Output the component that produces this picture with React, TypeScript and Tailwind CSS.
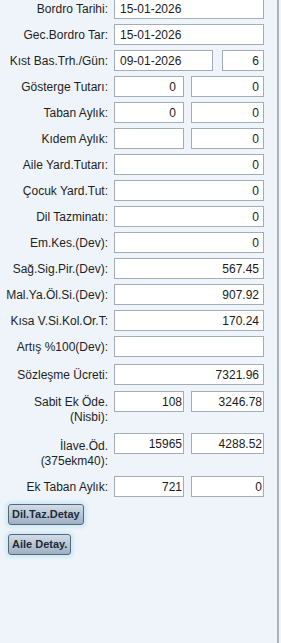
import React from "react";

type Field = { value: string; w: string; left?: boolean; pr?: string };
type Row = { label: string[]; fields: Field[]; mt: string; twoLine?: boolean; lpt?: string };

const full = "w-[150px]";

const rows: Row[] = [
  { label: ["Bordro Tarihi:"], fields: [{ value: "15-01-2026", w: full, left: true }], mt: "mt-[-2px]" },
  { label: ["Gec.Bordro Tar:"], fields: [{ value: "15-01-2026", w: full, left: true }], mt: "mt-[5px]" },
  {
    label: ["Kıst Bas.Trh./Gün:"],
    fields: [
      { value: "09-01-2026", w: "w-[99px]", left: true },
      { value: "6", w: "w-[42px]" },
    ],
    mt: "mt-[5px]",
  },
  {
    label: ["Gösterge Tutarı:"],
    fields: [
      { value: "0", w: "w-[70px]", pr: "pr-[7px]" },
      { value: "0", w: "w-[73px]" },
    ],
    mt: "mt-[5px]",
  },
  {
    label: ["Taban Aylık:"],
    fields: [
      { value: "0", w: "w-[70px]", pr: "pr-[7px]" },
      { value: "0", w: "w-[73px]" },
    ],
    mt: "mt-[5px]",
  },
  {
    label: ["Kıdem Aylık:"],
    fields: [
      { value: "", w: "w-[70px]" },
      { value: "0", w: "w-[73px]" },
    ],
    mt: "mt-[5px]",
  },
  { label: ["Aile Yard.Tutarı:"], fields: [{ value: "0", w: full }], mt: "mt-[5px]" },
  { label: ["Çocuk Yard.Tut:"], fields: [{ value: "0", w: full }], mt: "mt-[5px]" },
  { label: ["Dil Tazminatı:"], fields: [{ value: "0", w: full }], mt: "mt-[5px]" },
  { label: ["Em.Kes.(Dev):"], fields: [{ value: "0", w: full }], mt: "mt-[5px]" },
  { label: ["Sağ.Sig.Pir.(Dev):"], fields: [{ value: "567.45", w: full }], mt: "mt-[5px]" },
  { label: ["Mal.Ya.Öl.Si.(Dev):"], fields: [{ value: "907.92", w: full }], mt: "mt-[5px]" },
  { label: ["Kısa V.Si.Kol.Or.T:"], fields: [{ value: "170.24", w: full }], mt: "mt-[5px]" },
  { label: ["Artış %100(Dev):"], fields: [{ value: "", w: full }], mt: "mt-[5px]" },
  { label: ["Sözleşme Ücreti:"], fields: [{ value: "7321.96", w: full }], mt: "mt-[7px]" },
  {
    label: ["Sabit Ek Öde.", "(Nisbi):"],
    fields: [
      { value: "108", w: "w-[70px]", pr: "pr-px" },
      { value: "3246.78", w: "w-[73px]", pr: "pr-px" },
    ],
    mt: "mt-[6px]",
    twoLine: true,
    lpt: "pt-[4px]",
  },
  {
    label: ["İlave.Öd.", "(375ekm40):"],
    fields: [
      { value: "15965", w: "w-[70px]", pr: "pr-px" },
      { value: "4288.52", w: "w-[73px]", pr: "pr-px" },
    ],
    mt: "mt-[8px]",
    twoLine: true,
    lpt: "pt-[6px]",
  },
  {
    label: ["Ek Taban Aylık:"],
    fields: [
      { value: "721", w: "w-[70px]", pr: "pr-px" },
      { value: "0", w: "w-[73px]", pr: "pr-px" },
    ],
    mt: "mt-[7px]",
  },
];

function Box({ f }: { f: Field }) {
  return (
    <input
      readOnly
      defaultValue={f.value}
      className={`${f.w} h-[21px] border border-[#a4acb4] bg-white text-[12px] text-[#1b1b1b] outline-none ${
        f.left ? "pl-[5px] text-left" : `${f.pr ?? "pr-[4px]"} text-right`
      }`}
    />
  );
}

function FormRow({ row }: { row: Row }) {
  return (
    <div className={`flex ${row.twoLine ? "items-start" : "items-center"} ${row.mt}`}>
      <div
        className={`w-[108px] shrink-0 text-right text-[12px] text-[#1f1f1f] ${
          row.twoLine ? `${row.lpt} leading-[15px]` : "leading-[14px]"
        }`}
      >
        {row.label.map((l) => (
          <div key={l}>{l}</div>
        ))}
      </div>
      <div className={`ml-[6px] flex w-[150px] ${row.fields.length > 1 ? "justify-between" : ""}`}>
        {row.fields.map((f, i) => (
          <Box key={i} f={f} />
        ))}
      </div>
    </div>
  );
}

function DetailButton({ text }: { text: string }) {
  return (
    <button className="h-[21px] rounded-[3px] border border-[#56677a] bg-gradient-to-b from-[#d3dce6] to-[#9fb0c3] px-[3px] text-[11px] font-bold leading-none text-[#1c2b3b] shadow-[0_0_3px_3px_#d2ebf6]">
      {text}
    </button>
  );
}

export default function App() {
  return (
    <div
      className="flex h-[643px] w-[281px] overflow-hidden bg-[#eef4f9]"
      style={{ fontFamily: '"Liberation Sans", Arial, sans-serif' }}
    >
      <div className="w-[277px] shrink-0">
        {rows.map((r) => (
          <FormRow key={r.label.join(" ")} row={r} />
        ))}
        <div className="ml-[8px] mt-[7px] flex flex-col items-start gap-[9px]">
          <DetailButton text="Dil.Taz.Detay" />
          <DetailButton text="Aile Detay." />
        </div>
      </div>
      <div className="w-[2px] shrink-0 bg-[#a9b1b9]" />
      <div className="flex-1 bg-[#f1f5f9]" />
    </div>
  );
}
